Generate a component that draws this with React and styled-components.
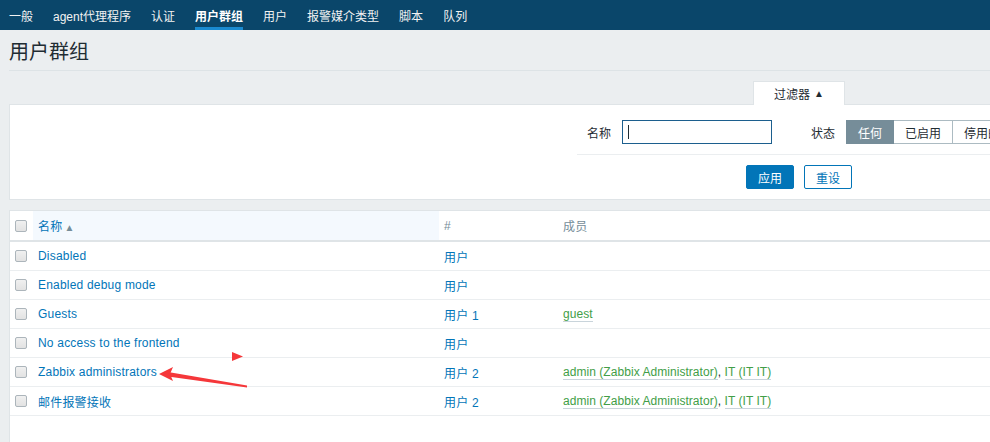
import styled, { createGlobalStyle } from "styled-components";

const GlobalStyle = createGlobalStyle`
html, body {
  margin: 0;
  padding: 0;
  overflow: hidden;
  background: #ebeef0;
}
body {
  font-family: "Liberation Sans", Arial, "Noto Sans CJK SC", sans-serif;
  font-size: 12px;
  color: #1f2c33;
}
`

const Page = styled.div`
position: relative;
width: 1100px;
height: 442px;
`
const Nav = styled.div`
display: flex;
height: 30px;
background: #0a466a;
padding-left: 9px;
column-gap: 20px;
`
const NavItem = styled.div`
display: flex;
align-items: center;
height: 30px;
box-sizing: border-box;
padding-top: 3px;
color: ${props => props.active ? '#ffffff' : '#f2f2f2'};
font-weight: ${props => props.active ? 'bold' : 'normal'};
border-bottom: 3px solid ${props => props.active ? '#1a8ad0' : 'transparent'};
`
const Main = styled.div`
padding: 0 0 0 9px;
`
const Header = styled.div`
display: flex;
align-items: center;
height: 40px;
border-bottom: 1px solid #dde3e6;
`
const Title = styled.h1`
margin: 0;
font-size: 20px;
font-weight: normal;
color: #1f2c33;
`
const TabRow = styled.div`
display: flex;
padding-left: 744px;
margin-top: 10px;
`
const Tab = styled.div`
width: 90px;
height: 23px;
display: flex;
align-items: center;
justify-content: center;
background: #fff;
border: 1px solid #dfe4e7;
border-bottom: none;
margin-bottom: -1px;
position: relative;
z-index: 1;
column-gap: 4px;
`
const TabArrow = styled.span`
font-size: 10px;
`
const FilterPanel = styled.div`
background: #fff;
border: 1px solid #dfe4e7;
height: 94px;
`
const FilterBlock = styled.div`
width: 444px;
margin-left: 567px;
display: flex;
flex-direction: column;
`
const FormRow = styled.div`
display: flex;
align-items: center;
padding: 15px 0 10px 10px;
border-bottom: 1px solid #ebeef0;
`
const Label = styled.span`
margin-right: ${props => props.gap}px;
`
const Input = styled.div`
width: 150px;
height: 24px;
box-sizing: border-box;
border: 1px solid #1c5f8e;
margin-right: 39px;
display: flex;
align-items: center;
padding-left: 5px;
`
const Caret = styled.span`
width: 1px;
height: 14px;
background: #1f2c33;
`
const Segments = styled.div`
display: flex;
`
const Segment = styled.div`
width: ${props => props.w}px;
height: 24px;
box-sizing: border-box;
display: flex;
align-items: center;
justify-content: center;
border: 1px solid ${props => props.active ? '#768d99' : '#acbbc2'};
border-left: ${props => props.first ? '1px solid #768d99' : 'none'};
background: ${props => props.active ? '#768d99' : '#fff'};
color: ${props => props.active ? '#fff' : '#1f2c33'};
white-space: nowrap;
overflow: hidden;
`
const ButtonRow = styled.div`
display: flex;
justify-content: center;
column-gap: 10px;
padding-top: 10px;
`
const Button = styled.div`
width: 48px;
height: 24px;
box-sizing: border-box;
border-radius: 2px;
display: flex;
align-items: center;
justify-content: center;
background: ${props => props.primary ? '#0275b8' : '#fff'};
color: ${props => props.primary ? '#fff' : '#0275b8'};
border: 1px solid #0275b8;
`
const TableCard = styled.div`
margin-top: 10px;
background: #fff;
border-top: 1px solid #dfe4e7;
border-left: 1px solid #dfe4e7;
height: 240px;
letter-spacing: 0.2px;
`
const Table = styled.table`
border-collapse: collapse;
width: 100%;
`
const Th = styled.th`
text-align: left;
font-weight: normal;
height: 29px;
padding: 0 0 0 ${props => props.pl ?? 5}px;
width: ${props => props.w ? props.w + 'px' : 'auto'};
background: ${props => props.sorted ? '#f4f9fe' : '#fff'};
color: ${props => props.sorted ? '#0275b8' : '#768d99'};
border-bottom: 2px solid #dfe4e7;
`
const Td = styled.td`
height: 28px;
padding: 0 0 0 ${props => props.pl ?? 5}px;
border-bottom: 1px solid #ebeef0;
`
const Checkbox = styled.span`
display: block;
width: 10px;
height: 10px;
border: 1px solid #acb5bb;
border-radius: 2px;
background: linear-gradient(#f0f0f0, #e2e2e2);
`
const SortArrow = styled.span`
color: #768d99;
font-size: 10px;
margin-left: 2px;
`
const Link = styled.span`
color: #0275b8;
`
const Members = styled.span`
letter-spacing: 0.05px;
`
const Member = styled.span`
color: #429e47;
border-bottom: 1px solid #c9d4db;
`
const Overlay = styled.svg`
position: absolute;
left: 0;
top: 0;
pointer-events: none;
`

const navItems = ['一般', 'agent代理程序', '认证', '用户群组', '用户', '报警媒介类型', '脚本', '队列']

const rows = [
    { name: 'Disabled', count: '', members: [] },
    { name: 'Enabled debug mode', count: '', members: [] },
    { name: 'Guests', count: '1', members: ['guest'] },
    { name: 'No access to the frontend', count: '', members: [] },
    { name: 'Zabbix administrators', count: '2', members: ['admin (Zabbix Administrator)', 'IT (IT IT)'] },
    { name: '邮件报警接收', count: '2', members: ['admin (Zabbix Administrator)', 'IT (IT IT)'] },
]

const App = () => {
    return (
        <>
            <GlobalStyle />
            <Page>
                <Nav>
                    {navItems.map(item => (
                        <NavItem key={item} active={item === '用户群组'}>{item}</NavItem>
                    ))}
                </Nav>
                <Main>
                    <Header>
                        <Title>用户群组</Title>
                    </Header>
                    <TabRow>
                        <Tab>过滤器 <TabArrow>▲</TabArrow></Tab>
                    </TabRow>
                    <FilterPanel>
                        <FilterBlock>
                            <FormRow>
                                <Label gap={11}>名称</Label>
                                <Input><Caret /></Input>
                                <Label gap={11}>状态</Label>
                                <Segments>
                                    <Segment w={48} first active>任何</Segment>
                                    <Segment w={59}>已启用</Segment>
                                    <Segment w={59}>停用的</Segment>
                                </Segments>
                            </FormRow>
                            <ButtonRow>
                                <Button primary>应用</Button>
                                <Button>重设</Button>
                            </ButtonRow>
                        </FilterBlock>
                    </FilterPanel>
                    <TableCard>
                        <Table>
                            <thead>
                                <tr>
                                    <Th w={18} pl={5}><Checkbox /></Th>
                                    <Th w={401} sorted>名称<SortArrow>▲</SortArrow></Th>
                                    <Th w={114}>#</Th>
                                    <Th>成员</Th>
                                </tr>
                            </thead>
                            <tbody>
                                {rows.map(row => (
                                    <tr key={row.name}>
                                        <Td pl={5}><Checkbox /></Td>
                                        <Td><Link>{row.name}</Link></Td>
                                        <Td><Link>用户{row.count ? ' ' + row.count : ''}</Link></Td>
                                        <Td>
                                            <Members>
                                                {row.members.map((m, idx) => (
                                                    <span key={m}>
                                                        {idx > 0 && ', '}
                                                        <Member>{m}</Member>
                                                    </span>
                                                ))}
                                            </Members>
                                        </Td>
                                    </tr>
                                ))}
                            </tbody>
                        </Table>
                    </TableCard>
                </Main>
                <Overlay width="990" height="442" viewBox="0 0 990 442">
                    <polygon points="232,352 243,356.5 232,361" fill="#f5373a" />
                    <polygon points="168,372 247,385.5 247,387.5 168,376.5" fill="#f5373a" />
                    <polygon points="159,374 173,367 170,374 173,381" fill="#f5373a" />
                </Overlay>
            </Page>
        </>
    )
}
export default App;
